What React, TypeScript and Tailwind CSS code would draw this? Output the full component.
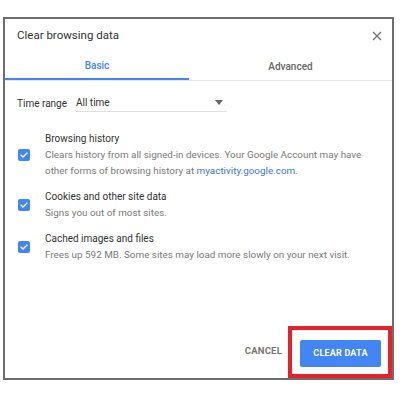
import React from 'react';

const Check = () => (
  <div className="w-[12px] h-[12px] rounded-[2px] bg-[#4285f4] flex items-center justify-center shrink-0">
    <svg width="10" height="10" viewBox="0 0 24 24" fill="none" stroke="white" strokeWidth="3.2" strokeLinecap="square">
      <path d="M5 12.5l4.5 4.5L19 7.5" />
    </svg>
  </div>
);

const Item = ({ title, children, className = '' }: { title: string; children: React.ReactNode; className?: string }) => (
  <div className={`flex items-center pl-[13px] ${className}`}>
    <Check />
    <div className="ml-[15px]">
      <div className="text-[10px] leading-[16px] text-[#333]">{title}</div>
      <div className="text-[9.9px] leading-[16px] text-[#7a7a7a]">{children}</div>
    </div>
  </div>
);

export default function App() {
  return (
    <div className="w-[400px] h-[400px] bg-white pt-[17px] pl-[3px]" style={{ fontFamily: 'Roboto, "Noto Sans", sans-serif' }}>
      <div className="w-[391px] h-[363px] border-2 border-[#6e6e6e] flex flex-col">
        <div className="h-[34px] flex items-center justify-between pl-[12px] pr-[10px]">
          <span className="text-[11.5px] text-[#333]">Clear browsing data</span>
          <svg width="10" height="10" viewBox="0 0 10 10" stroke="#707070" strokeWidth="1.3">
            <path d="M1 1l8 8M9 1l-8 8" />
          </svg>
        </div>
        <div className="flex h-[28px] border-b border-[#e6e6e6]">
          <div className="w-[184px] flex items-center justify-center text-[10px] font-medium text-[#4285f4] border-b-2 border-[#4285f4]">
            Basic
          </div>
          <div className="flex-1 flex items-center justify-center text-[10px] font-medium text-[#666]">
            Advanced
          </div>
        </div>
        <div className="flex-1">
          <div className="flex items-center mt-[13px] pl-[12px] h-[18px]">
            <span className="text-[10px] text-[#333] w-[59px]">Time range</span>
            <div className="w-[151px] h-[18px] flex items-center justify-between border-b border-[#e0e0e0] pr-[4px]">
              <span className="text-[10px] text-[#333]">All time</span>
              <svg width="8" height="5" viewBox="0 0 8 5"><path d="M0 0h8L4 5z" fill="#666" /></svg>
            </div>
          </div>
          <div className="mt-[19px] flex flex-col">
            <Item title="Browsing history">
              Clears history from all signed-in devices. Your Google Account may have
              <br />
              other forms of browsing history at <span className="text-[#3b73e0]">myactivity.google.com</span>.
            </Item>
            <Item title="Cookies and other site data" className="mt-[10px]">Signs you out of most sites.</Item>
            <Item title="Cached images and files" className="mt-[10px]">Frees up 592 MB. Some sites may load more slowly on your next visit.</Item>
          </div>
        </div>
        <div className="flex items-end justify-end">
          <button className="text-[9.5px] font-bold text-[#757575] mb-[20px] mr-[6px] tracking-[0.2px]">CANCEL</button>
          <div className="border-[4px] border-[#e8202a] pl-[8px] pr-[7px] pt-[9px] pb-[7px]">
            <button className="w-[81px] h-[27px] rounded-[2px] bg-[#4285f4] text-white text-[9px] font-bold tracking-[0.2px]">
              CLEAR DATA
            </button>
          </div>
        </div>
      </div>
    </div>
  );
}
